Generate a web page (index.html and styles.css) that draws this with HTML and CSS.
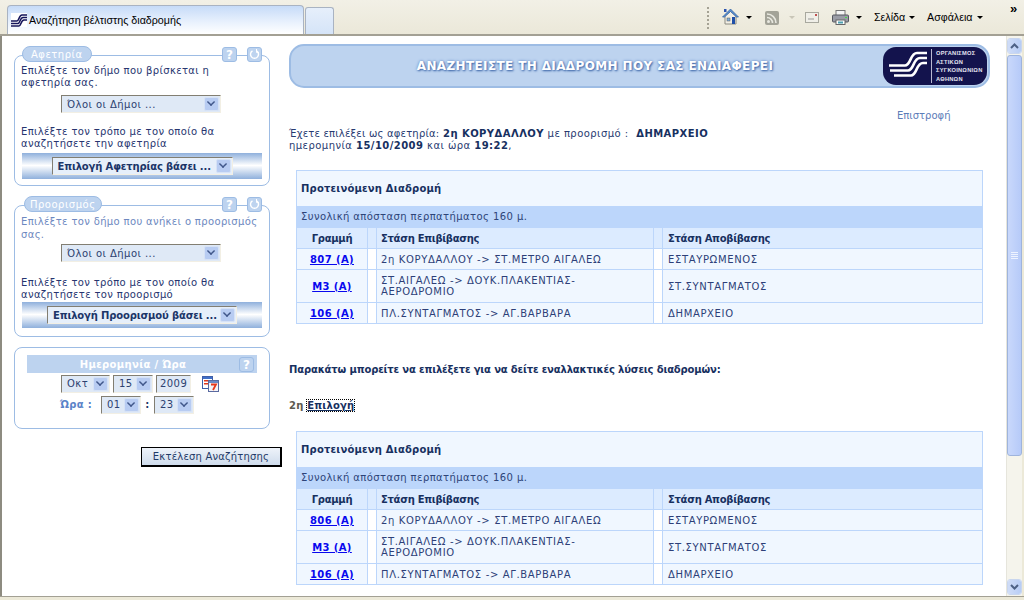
FILE: index.html
```html
<!DOCTYPE html>
<html lang="el">
<head>
<meta charset="utf-8">
<title>Αναζήτηση βέλτιστης διαδρομής</title>
<link rel="stylesheet" href="styles.css">
</head>
<body>
<header class="chrome">
  <div class="tabs">
    <div class="tab">
      <svg class="favicon" width="16" height="14" viewBox="0 0 16 14"><rect width="16" height="14" fill="#fff"/><path d="M0 8H6C8 8 8 2 11 2H16M0 10.500H7C9 10.500 9 4.500 12 4.500H16M0 13H8C10 13 10 7 13 7H16" fill="none" stroke="#14145a" stroke-width="1.600"/></svg>
      <span>Αναζήτηση βέλτιστης διαδρομής</span>
    </div>
    <div class="tab-new"></div>
  </div>
  <div class="tools">
    <span class="grip"></span>
    <svg class="ic-home" width="17" height="17" viewBox="0 0 17 17"><path d="M3 8V16H14V8L8.500 3Z" fill="#f2efe6" stroke="#8a8a80"/><path d="M0.500 9L8.500 1L16.500 9L14.500 9L8.500 3.500L2.500 9Z" fill="#5b8fd0" stroke="#2f5f9f" stroke-width=".7"/><rect x="2" y="1" width="2.500" height="3" fill="#2a52b0"/><rect x="5" y="10" width="3" height="3" fill="#7fb0e0" stroke="#555" stroke-width=".5"/><rect x="10" y="9" width="3" height="7" fill="#1f4fa8"/></svg>
    <i class="caret c1"></i>
    <svg class="ic-rss" width="14" height="14" viewBox="0 0 14 14"><rect width="14" height="14" rx="2" fill="#a3a398"/><circle cx="3.500" cy="10.500" r="1.500" fill="#e8e8e0"/><path d="M2 6.500A5.500 5.500 0 0 1 7.500 12M2 3A9 9 0 0 1 11 12" fill="none" stroke="#e8e8e0" stroke-width="1.600"/></svg>
    <i class="caret off c2"></i>
    <svg class="ic-mail" width="14" height="11" viewBox="0 0 14 11"><rect x=".5" y=".5" width="13" height="10" fill="#f0efe8" stroke="#a8a89e"/><rect x="10" y="2" width="2" height="2" fill="#c05050"/><path d="M3 7H9" stroke="#999"/></svg>
    <svg class="ic-print" width="17" height="15" viewBox="0 0 17 15"><rect x="4" y=".5" width="9" height="5" fill="#f4f4f4" stroke="#777"/><rect x=".5" y="5" width="16" height="7" rx="1" fill="#9a9ca6" stroke="#55575f"/><rect x="4" y="10" width="9" height="4.500" fill="#fff" stroke="#666"/><rect x="6" y="11.500" width="5" height="2" fill="#4fa0b0"/><rect x="13" y="7" width="2" height="1" fill="#4d4"/></svg>
    <i class="caret c3"></i>
    <span class="menu m1">Σελίδα</span><i class="caret c4"></i>
    <span class="menu m2">Ασφάλεια</span><i class="caret c5"></i>
    <span class="more">»</span>
  </div>
</header>

<div class="viewport">
  <div class="page">
    <aside class="sidebar">
      <section class="panel p-origin">
        <span class="legend">Αφετηρία</span>
        <span class="mini help">?</span>
        <span class="mini reset"><svg width="11" height="11" viewBox="0 0 11 11"><path d="M3.500 1.800A4 4 0 1 0 7.500 1.800" fill="none" stroke="#fff" stroke-width="1.400"/><path d="M7.500 0V3.500H10" fill="none" stroke="#fff"/></svg></span>
        <p class="note">Επιλέξτε τον δήμο που βρίσκεται η<br>αφετηρία σας.</p>
        <div class="sel-row gap-a"><div class="sel w-dim"><span>Όλοι οι Δήμοι ...</span><i class="arr"></i></div></div>
        <p class="note gap-b">Επιλέξτε τον τρόπο με τον οποίο θα αναζητήσετε την αφετηρία</p>
        <div class="band gap-c"><div class="sel bold w-o"><span>Επιλογή Αφετηρίας βάσει ...</span><i class="arr"></i></div></div>
      </section>

      <section class="panel p-dest">
        <span class="legend">Προορισμός</span>
        <span class="mini help">?</span>
        <span class="mini reset"><svg width="11" height="11" viewBox="0 0 11 11"><path d="M3.500 1.800A4 4 0 1 0 7.500 1.800" fill="none" stroke="#fff" stroke-width="1.400"/><path d="M7.500 0V3.500H10" fill="none" stroke="#fff"/></svg></span>
        <p class="note dim">Επιλέξτε τον δήμο που ανήκει ο προορισμός σας.</p>
        <div class="sel-row gap-d"><div class="sel w-dim"><span>Όλοι οι Δήμοι ...</span><i class="arr"></i></div></div>
        <p class="note gap-e">Επιλέξτε τον τρόπο με τον οποίο θα αναζητήσετε τον προορισμό</p>
        <div class="band gap-f"><div class="sel bold w-d"><span>Επιλογή Προορισμού βάσει ...</span><i class="arr"></i></div></div>
      </section>

      <section class="panel p-date">
        <div class="date-head"><b>Ημερομηνία / Ώρα</b><span class="mini help inline">?</span></div>
        <div class="date-row">
          <div class="sel w-mon"><span>Οκτ</span><i class="arr"></i></div>
          <div class="sel w-day"><span>15</span><i class="arr"></i></div>
          <div class="sel w-year"><span>2009</span></div>
          <svg class="cal" width="17" height="16" viewBox="0 0 17 16"><rect x=".5" y=".5" width="10" height="12" fill="#fff" stroke="#3f5fa8"/><rect x="1" y="1" width="9" height="2" fill="#3f6fc8"/><rect x="2" y="4" width="5" height="1.500" fill="#e0381c"/><rect x="2" y="7" width="5" height="1.500" fill="#e0381c"/><rect x="6.500" y="4.500" width="10" height="11" fill="#f4f4f8" stroke="#5a6aa0"/><rect x="7" y="5" width="9" height="2" fill="#6a8ac8"/><path d="M9 8.500H14L11 14" fill="none" stroke="#e8381c" stroke-width="1.800"/></svg>
        </div>
        <div class="time-row">
          <b class="time-label">Ώρα :</b>
          <div class="sel w-day"><span>01</span><i class="arr"></i></div>
          <b class="time-sep">:</b>
          <div class="sel w-day"><span>23</span><i class="arr"></i></div>
        </div>
      </section>

      <button class="run" type="button">Εκτέλεση Αναζήτησης</button>
    </aside>

    <main class="content">
      <div class="banner">
        <h1>ΑΝΑΖΗΤΕΙΣΤΕ ΤΗ ΔΙΑΔΡΟΜΗ ΠΟΥ ΣΑΣ ΕΝΔΙΑΦΕΡΕΙ</h1>
        <div class="logo">
          <svg width="38" height="30" viewBox="0 0 38 30"><path d="M0 14.500H16C22 14.500 21 2 28 2H38M1 19.500H19C25 19.500 24 7 31 7H38M5 24.500H22C28 24.500 27 12 34 12H38" fill="none" stroke="#fff" stroke-width="2.600"/></svg>
          <div class="logo-text"><span>ΟΡΓΑΝΙΣΜΟΣ</span><span>ΑΣΤΙΚΩΝ</span><span>ΣΥΓΚΟΙΝΩΝΙΩΝ</span><span>ΑΘΗΝΩΝ</span></div>
        </div>
      </div>
      <div class="back"><a>Επιστροφή</a></div>
      <p class="summary"><span class="tight">Έχετε επιλέξει ως αφετηρία:</span> <b>2η ΚΟΡΥΔΑΛΛΟΥ</b> με προορισμό : <b class="dest">ΔΗΜΑΡΧΕΙΟ</b><br>ημερομηνία <b>15/10/2009</b> και ώρα <b>19:22</b>,</p>

      <table class="route">
        <colgroup><col class="c-line"><col class="c-gap"><col class="c-from"><col class="c-gap"><col></colgroup>
        <tr class="r-title"><th colspan="5">Προτεινόμενη Διαδρομή</th></tr>
        <tr class="r-dist"><td colspan="5">Συνολική απόσταση περπατήματος 160 μ.</td></tr>
        <tr class="r-head"><th class="ctr">Γραμμή</th><th></th><th>Στάση Επιβίβασης</th><th></th><th>Στάση Αποβίβασης</th></tr>
        <tr class="r-row"><td class="ctr"><a class="ln">807 (Α)</a></td><td class="sp"></td><td>2η ΚΟΡΥΔΑΛΛΟΥ -&gt; ΣΤ.ΜΕΤΡΟ ΑΙΓΑΛΕΩ</td><td class="sp"></td><td>ΕΣΤΑΥΡΩΜΕΝΟΣ</td></tr>
        <tr class="r-row tall"><td class="ctr"><a class="ln">Μ3 (Α)</a></td><td class="sp"></td><td>ΣΤ.ΑΙΓΑΛΕΩ -&gt; ΔΟΥΚ.ΠΛΑΚΕΝΤΙΑΣ-<br>ΑΕΡΟΔΡΟΜΙΟ</td><td class="sp"></td><td>ΣΤ.ΣΥΝΤΑΓΜΑΤΟΣ</td></tr>
        <tr class="r-row"><td class="ctr"><a class="ln">106 (Α)</a></td><td class="sp"></td><td>ΠΛ.ΣΥΝΤΑΓΜΑΤΟΣ -&gt; ΑΓ.ΒΑΡΒΑΡΑ</td><td class="sp"></td><td>ΔΗΜΑΡΧΕΙΟ</td></tr>
      </table>

      <p class="alt">Παρακάτω μπορείτε να επιλέξετε για να δείτε εναλλακτικές λύσεις διαδρομών:</p>
      <p class="choice"><b class="num">2η</b> <a class="focus">Επιλογή</a></p>

      <table class="route second">
        <colgroup><col class="c-line"><col class="c-gap"><col class="c-from"><col class="c-gap"><col></colgroup>
        <tr class="r-title"><th colspan="5">Προτεινόμενη Διαδρομή</th></tr>
        <tr class="r-dist"><td colspan="5">Συνολική απόσταση περπατήματος 160 μ.</td></tr>
        <tr class="r-head"><th class="ctr">Γραμμή</th><th></th><th>Στάση Επιβίβασης</th><th></th><th>Στάση Αποβίβασης</th></tr>
        <tr class="r-row"><td class="ctr"><a class="ln">806 (Α)</a></td><td class="sp"></td><td>2η ΚΟΡΥΔΑΛΛΟΥ -&gt; ΣΤ.ΜΕΤΡΟ ΑΙΓΑΛΕΩ</td><td class="sp"></td><td>ΕΣΤΑΥΡΩΜΕΝΟΣ</td></tr>
        <tr class="r-row tall"><td class="ctr"><a class="ln">Μ3 (Α)</a></td><td class="sp"></td><td>ΣΤ.ΑΙΓΑΛΕΩ -&gt; ΔΟΥΚ.ΠΛΑΚΕΝΤΙΑΣ-<br>ΑΕΡΟΔΡΟΜΙΟ</td><td class="sp"></td><td>ΣΤ.ΣΥΝΤΑΓΜΑΤΟΣ</td></tr>
        <tr class="r-row"><td class="ctr"><a class="ln">106 (Α)</a></td><td class="sp"></td><td>ΠΛ.ΣΥΝΤΑΓΜΑΤΟΣ -&gt; ΑΓ.ΒΑΡΒΑΡΑ</td><td class="sp"></td><td>ΔΗΜΑΡΧΕΙΟ</td></tr>
      </table>
    </main>
  </div>
  <div class="scrollbar">
    <div class="sb-btn up"><svg width="9" height="6" viewBox="0 0 9 6"><path d="M1 5L4.500 1.500L8 5" fill="none" stroke="#4d6185" stroke-width="2"/></svg></div>
    <div class="sb-thumb"><i></i><i></i><i></i><i></i></div>
    <div class="sb-track"></div>
    <div class="sb-btn down"><svg width="9" height="6" viewBox="0 0 9 6"><path d="M1 1L4.500 4.500L8 1" fill="none" stroke="#4d6185" stroke-width="2"/></svg></div>
  </div>
</div>
<div class="statusline"></div>
</body>
</html>
```

FILE: styles.css
```css
* { box-sizing: border-box; }
html, body { margin: 0; height: 100%; overflow: hidden; }
body { width: 1024px; height: 600px; display: flex; flex-direction: column; background: #ece9d8; font-family: "DejaVu Sans", Verdana, sans-serif; font-size: 10px; color: #1f3a68; }
p, h1 { margin: 0; }

/* browser chrome */
.chrome { height: 36px; flex: none; display: flex; justify-content: space-between; background: linear-gradient(#f2f0e6, #ebe8d9); border-bottom: 2px solid #a3a094; font-family: "Liberation Sans", Arial, sans-serif; color: #000; }
.tabs { display: flex; align-items: flex-end; padding-left: 7px; gap: 1px; }
.tab { width: 297px; height: 29px; display: flex; align-items: center; gap: 2px; padding: 0 0 0 3px; border: 1px solid #a9b3c2; border-bottom: 0; border-radius: 4px 4px 0 0; background: linear-gradient(#c6dbf8, #eaf2fd 60%, #fff); font-size: 10.700px; }
.favicon { flex: none; }
.tab-new { width: 29px; height: 27px; border: 1px solid #a9b3c2; border-bottom: 0; border-radius: 3px 3px 0 0; background: linear-gradient(#e6effb, #d5e4f8); }
.tools { position: relative; width: 334px; font-size: 10.700px; }
.tools > * { position: absolute; }
.grip { left: 17px; top: 7px; height: 22px; border-left: 2px dotted #a5a294; }
.ic-home { left: 32px; top: 8px; }
.ic-rss { left: 75px; top: 11px; }
.ic-mail { left: 115px; top: 12px; }
.ic-print { left: 142px; top: 10px; }
.caret { width: 0; height: 0; border: 3px solid transparent; border-top: 3px solid #000; border-bottom: 0; top: 16px; }
.caret.off { border-top-color: #c9c6b8; }
.c1 { left: 56px; } .c2 { left: 99px; } .c3 { left: 166px; } .c4 { left: 219px; } .c5 { left: 287px; }
.menu { top: 11px; }
.m1 { left: 184px; } .m2 { left: 237px; }
.more { left: 320px; top: 2px; font-size: 13px; font-weight: bold; line-height: 14px; }

/* viewport */
.viewport { flex: 1; min-height: 0; display: flex; border-left: 2px solid #8d8b80; border-right: 2px solid #ece9d8; background: #fff; }
.page { flex: 1; min-width: 0; display: flex; overflow: hidden; }
.statusline { height: 4px; flex: none; border-top: 1px solid #a3a094; background: #ece9d8; }

/* sidebar */
.sidebar { width: 287px; flex: none; padding: 19px 0 0 12px; letter-spacing: .35px; }
.panel { position: relative; width: 256px; border: 1px solid #9dbce4; border-radius: 8px; padding: 9px 6px 6px 6px; }
.p-origin { height: 131px; }
.p-dest { height: 132px; margin-top: 19px; }
.p-date { height: 82px; margin-top: 10px; padding: 7px 11px 0 12px; }
.note { line-height: 12px; color: #27356f; }
.note.dim { color: #6d88c0; line-height: 13px; }
.legend { position: absolute; left: 7px; top: -10px; height: 16px; padding: 0 8px; border: 1px solid #9dbce4; border-radius: 8px; background: #bdd3ef; color: #fff; font-size: 10px; line-height: 15px; letter-spacing: .5px; }
.p-dest .legend { left: 9px; padding: 0 5px; }
.mini { position: absolute; top: -9px; width: 15px; height: 15px; display: flex; align-items: center; justify-content: center; border: 1px solid #9dbce4; border-radius: 3px; background: #bdd3ef; color: #fff; font-size: 12px; font-weight: bold; letter-spacing: 0; }
.help { left: 207px; }
.reset { left: 232px; }
.mini.inline { left: 212px; top: 2px; }
.sel-row { display: flex; justify-content: center; padding-right: 2px; }
.gap-a { margin-top: 6px; } .gap-b { margin-top: 13px; } .gap-c { margin-top: 3px; }
.gap-d { margin-top: 3px; } .gap-e { margin-top: 15px; } .gap-f { margin-top: 1px; }
.band { width: 240px; height: 26px; margin-left: 1px; display: flex; align-items: center; justify-content: center; background: linear-gradient(#8fb0dc, #fff 48%, #8fb0dc); }
.sel { height: 18px; display: flex; align-items: center; justify-content: space-between; padding: 0 1px 0 5px; border: 1px solid; border-color: #827e72 #f2efe4 #f2efe4 #827e72; background: #dfe9f6; color: #2c4170; font-size: 10px; letter-spacing: .45px; white-space: nowrap; }
.sel.bold { font-weight: bold; color: #1b3568; background: #e6effa; letter-spacing: -.15px; }
.arr { width: 15px; height: 14px; position: relative; flex: none; border: 1px solid #d6e2f6; border-radius: 2px; background: #b8ccf2; }
.arr::after { content: ""; position: absolute; left: 2px; top: 0; width: 6px; height: 6px; box-sizing: content-box; border: solid #40578a; border-width: 0 2px 2px 0; transform: scale(.72) rotate(45deg); }
.w-dim { width: 160px; }
.w-o { width: 181px; }
.w-d { width: 190px; }
.w-mon { width: 49px; } .w-day { width: 40px; } .w-year { width: 35px; padding-left: 3px; }
.date-head { position: relative; height: 18px; margin-bottom: 2px; padding-right: 18px; display: flex; justify-content: center; align-items: center; width: 230px; background: #bdd3ef; color: #fff; }
.date-row { display: flex; align-items: center; gap: 3px; padding-left: 34px; height: 17px; }
.cal { margin-left: 8px; flex: none; }
.time-row { display: flex; align-items: center; margin-top: 4px; padding-left: 33px; height: 17px; }
.time-label { width: 41px; color: #5a83c8; font-family: "DejaVu Sans", sans-serif; }
.time-sep { width: 13px; text-align: center; color: #1f3a68; }
.run { display: block; width: 141px; height: 20px; margin: 18px 0 0 127px; padding: 0; border: 1px solid #000; border-right-width: 2px; border-bottom-width: 2px; background: linear-gradient(#eef3fa, #cfdcec); color: #1f3a68; font: 10px "DejaVu Sans", sans-serif; letter-spacing: .2px; }

/* main column */
.content { flex: 1; min-width: 0; padding-top: 8px; }
.banner { width: 701px; height: 44px; display: flex; align-items: center; justify-content: space-between; padding: 0 1px 0 0; border: 2px solid #9dbce4; border-radius: 15px; background: #bdd3ef; }
.banner h1 { flex: 1; text-align: center; padding-left: 16px; color: #fff; font-size: 12px; font-weight: bold; letter-spacing: .37px; text-shadow: 1px 1px 2px #3f68a8, 0 0 3px #5f88c8; }
.logo { width: 104px; height: 38px; flex: none; display: flex; align-items: center; gap: 4px; padding: 0 3px 0 6px; border-radius: 13px; background: #13134d; }
.logo svg { flex: none; }
.logo-text { display: flex; flex-direction: column; padding-left: 4px; border-left: 1px solid #b9b9d2; color: #e4e4f0; font: bold 5.700px/8.500px "Liberation Sans", sans-serif; letter-spacing: .25px; white-space: nowrap; }
.back { margin-top: 22px; padding-left: 608px; line-height: 12px; color: #5c7cb8; }
.summary { margin-top: 6px; line-height: 12px; letter-spacing: .45px; color: #273a70; }
.summary .tight { letter-spacing: .2px; }
.summary b { color: #17305f; }
.summary .dest { margin-left: 4px; }
.route { width: 687px; margin: 18px 0 0 7px; border-collapse: collapse; table-layout: fixed; border: 1px solid #bcd6fb; font-size: 10px; letter-spacing: .65px; }
.route td, .route th { padding: 0 4px; border: 1px solid #bcd6fb; text-align: left; }
.r-head th:last-child, .r-row td:last-child { padding-left: 5px; }
.c-line { width: 71px; } .c-gap { width: 9px; } .c-from { width: 277px; }
.r-title { height: 35px; background: #f0f7ff; }
.r-title th { border: 0; color: #17305f; letter-spacing: .2px; }
.r-dist { height: 22px; background: #bcd6fb; color: #2d4478; }
.r-dist td { border: 0; letter-spacing: .42px; }
.r-head { height: 21px; background: #dcebff; color: #17305f; letter-spacing: -.3px; }
.r-row { height: 21px; background: #f0f7ff; color: #2d3f78; }
.r-row.tall { height: 33px; }
.route .ctr { text-align: center; }
.route td.sp { background: #fff; }
.ln { color: #0808ee; font-weight: bold; text-decoration: underline; letter-spacing: .4px; }
.alt { margin-top: 40px; font-weight: bold; color: #17305f; letter-spacing: -.15px; line-height: 12px; }
.choice { margin-top: 24px; line-height: 12px; font-weight: bold; letter-spacing: .2px; }
.num { color: #5e5a50; }
.focus { color: #17305f; text-decoration: underline; outline: 1px dotted #000; }
.route.second { margin-top: 19px; }

/* scrollbar */
.scrollbar { width: 16px; flex: none; display: flex; flex-direction: column; padding-top: 2px; background: #f5f4ec; border-left: 1px solid #e6e5dc; }
.sb-btn { height: 16px; display: flex; align-items: center; justify-content: center; border: 1px solid #fff; border-radius: 3px; background: linear-gradient(90deg, #cfdcf7, #b8cdf5); outline: 1px solid #c9d6ee; outline-offset: -1px; }
.sb-thumb { height: 401px; margin-top: 1px; display: flex; flex-direction: column; align-items: center; justify-content: center; gap: 1px; border: 1px solid #9fb4dc; border-radius: 3px; background: linear-gradient(90deg, #c9d8fb, #b6caf8); }
.sb-thumb i { width: 7px; height: 1px; background: #eef3ff; }
.sb-track { flex: 1; }
.down { margin-bottom: 1px; }
```
